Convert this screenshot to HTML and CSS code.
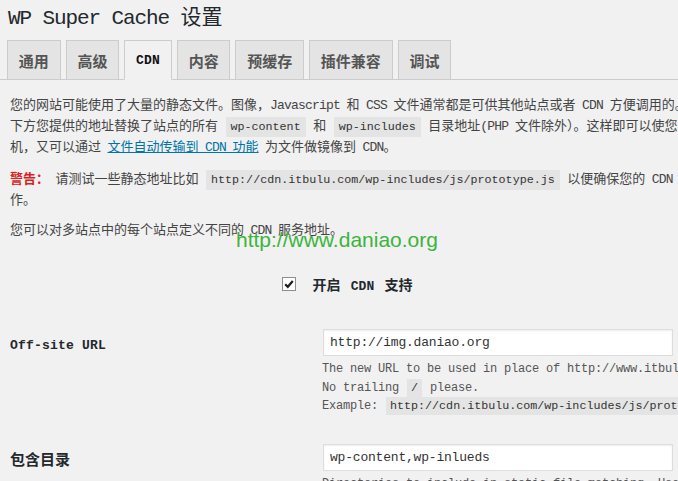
FILE: index.html
```html
<!DOCTYPE html>
<html lang="zh-CN">
<head>
<meta charset="utf-8">
<title>WP Super Cache 设置</title>
<link rel="stylesheet" href="styles.css">
</head>
<body>
<div class="wrap">
  <h1 class="title"><span class="t-en">WP Super Cache </span><span class="t-zh">设置</span></h1>
  <nav class="tabs">
    <a class="tab">通用</a>
    <a class="tab">高级</a>
    <a class="tab active"><span class="tab-en">CDN</span></a>
    <a class="tab">内容</a>
    <a class="tab">预缓存</a>
    <a class="tab">插件兼容</a>
    <a class="tab">调试</a>
  </nav>

  <p class="intro intro-1">您的网站可能使用了大量的静态文件。图像，<span class="en">Javascript</span> 和 <span class="en">CSS</span> 文件通常都是可供其他站点或者 <span class="en">CDN</span> 方便调用的。此插件会用<br>下方您提供的地址替换了站点的所有 <code>wp-content</code> 和 <code>wp-includes</code> 目录地址<span class="en">(PHP</span> 文件除外）。这样即可以使您的网站访问更快速<br>机，又可以通过 <a class="link">文件自动传输到 <span class="en">CDN</span> 功能</a> 为文件做镜像到 <span class="en">CDN</span>。</p>

  <p class="intro intro-2"><strong class="warn">警告：</strong> 请测试一些静态地址比如 <code>http://cdn.itbulu.com/wp-includes/js/prototype.js</code> 以便确保您的 <span class="en">CDN</span> 服务正常工<br>作。</p>

  <p class="intro intro-3">您可以对多站点中的每个站点定义不同的 <span class="en">CDN</span> 服务地址。</p>

  <div class="enable">
    <label class="enable-label">
      <span class="cb"><svg width="12" height="12" viewBox="0 0 12 12"><path d="M2.2 6.2 L4.8 8.8 L9.8 3" fill="none" stroke="#1d1d1d" stroke-width="2.2"/></svg></span>
      <strong class="enable-text">开启 <span class="en-b">CDN</span> 支持</strong>
    </label>
  </div>

  <div class="form">
    <div class="form-row">
      <div class="th"><span class="th-en">Off-site URL</span></div>
      <div class="td td-first">
        <input class="field" type="text" value="http://img.daniao.org">
        <p class="desc">The new URL to be used in place of http://www.itbulu.com for referencing static content.<br>No trailing <code>/</code> please.<br>Example: <code>http://cdn.itbulu.com/wp-includes/js/prototype.js</code>.</p>
      </div>
    </div>
    <div class="form-row">
      <div class="th th-zh">包含目录</div>
      <div class="td">
        <input class="field" type="text" value="wp-content,wp-inlueds">
        <p class="desc">Directories to include in static file matching. Use a comma as the delimiter.</p>
      </div>
    </div>
  </div>
</div>
<div class="watermark">http://www.daniao.org</div>
</body>
</html>
```

FILE: styles.css
```css
html, body {
  overflow: hidden;
}

body {
  margin: 0;
  background: #f1f1f1;
  color: #444;
  font-family: "Noto Sans CJK SC", sans-serif;
  font-size: 13px;
  line-height: 21px;
}

.wrap {
  width: 674px;
  padding-left: 10px;
}

/* Title */
.title {
  box-sizing: border-box;
  height: 30px;
  padding-top: 2px;
  margin: 0 0 10px -2px;
  font-size: 21px;
  font-weight: 400;
  line-height: 26px;
  color: #23282d;
  white-space: nowrap;
}

.t-en {
  font-family: "Liberation Mono", monospace;
  font-size: 21px;
  letter-spacing: -1.1px;
  line-height: 0;
}

.t-zh {
  font-size: 21px;
  line-height: 0;
}

/* Tabs */
.tabs {
  display: flex;
  gap: 5px;
  margin-left: -10px;
  padding-left: 7px;
  border-bottom: 1px solid #ccc;
  width: 700px;
}

.tab {
  box-sizing: border-box;
  height: 40px;
  margin-bottom: -1px;
  padding: 0 10.8px;
  border: 1px solid #ccc;
  background: #e4e4e4;
  color: #555;
  font-size: 15px;
  font-weight: 700;
  display: flex;
  align-items: center;
  text-decoration: none;
}

.tab.active {
  background: #f1f1f1;
  border-bottom-color: #f1f1f1;
  color: #111;
}

.tab-en {
  font-family: "Liberation Mono", monospace;
  font-size: 13px;
  letter-spacing: 0.2px;
}

/* Intro text */
.intro {
  margin: 0;
  white-space: nowrap;
  word-spacing: 3.6px;
}

.intro-1 { margin-top: 13px; }
.intro-2 { margin-top: 11px; }
.intro-3 { margin-top: 9px; }

.en {
  font-family: "Liberation Mono", monospace;
  letter-spacing: -0.8px;
  word-spacing: 0;
  line-height: 0;
}

code {
  font-family: "Liberation Mono", monospace;
  font-size: 11.7px;
  line-height: 0;
  word-spacing: 0;
  padding: 3px 5px;
  margin: 0 1px;
  background: #e4e4e4;
  color: #333;
}

.link {
  color: #0073aa;
  text-decoration: underline;
}

.warn {
  color: #d82020;
  font-weight: 700;
}

/* Enable checkbox row */
.enable {
  margin-top: 15px;
  padding: 20px 0;
  height: 20px;
  display: flex;
  justify-content: center;
  align-items: center;
  line-height: 20px;
}

.enable-label {
  display: flex;
  align-items: center;
}

.cb {
  box-sizing: border-box;
  width: 14px;
  height: 14px;
  border: 1px solid #8c8f94;
  background: #fff;
  display: flex;
  align-items: center;
  justify-content: center;
  margin-right: 17px;
}

.enable-text {
  font-size: 14px;
  color: #23282d;
  word-spacing: 7px;
}

.en-b {
  font-family: "Liberation Mono", monospace;
  font-size: 13px;
  word-spacing: 0;
  line-height: 0;
}

/* Form table */
.form-row {
  display: grid;
  grid-template-columns: 313px 350px;
}

.th {
  padding: 20px 0;
  height: 20px;
  line-height: 20px;
  font-weight: 700;
  color: #23282d;
}

.th-en {
  font-family: "Liberation Mono", monospace;
  font-size: 13px;
  letter-spacing: 0.2px;
  line-height: 0;
}

.th-zh {
  font-size: 15px;
  font-weight: 600;
}

.td {
  padding: 15px 0;
}

.td-first {
  padding-bottom: 13px;
}

.field {
  display: block;
  box-sizing: border-box;
  width: 350px;
  height: 27px;
  margin: 0;
  padding: 0 6px;
  border: 1px solid #ddd;
  background: #fff;
  box-shadow: inset 0 1px 2px rgba(0, 0, 0, 0.07);
  font-family: "Liberation Mono", monospace;
  font-size: 13px;
  letter-spacing: -0.2px;
  color: #333;
  outline: none;
}

.desc {
  margin: 4px 0 0 -1px;
  font-family: "Liberation Mono", monospace;
  font-size: 12px;
  line-height: 18.5px;
  letter-spacing: -0.2px;
  color: #555;
  white-space: nowrap;
}

.desc code {
  font-size: 11.7px;
  padding: 2px 4px;
  letter-spacing: 0;
}

/* Watermark overlay */
.watermark {
  position: absolute;
  left: 236px;
  top: 229px;
  font-family: "Liberation Sans", Arial, sans-serif;
  font-size: 21px;
  line-height: 21px;
  color: #3db43d;
  white-space: nowrap;
}
```
